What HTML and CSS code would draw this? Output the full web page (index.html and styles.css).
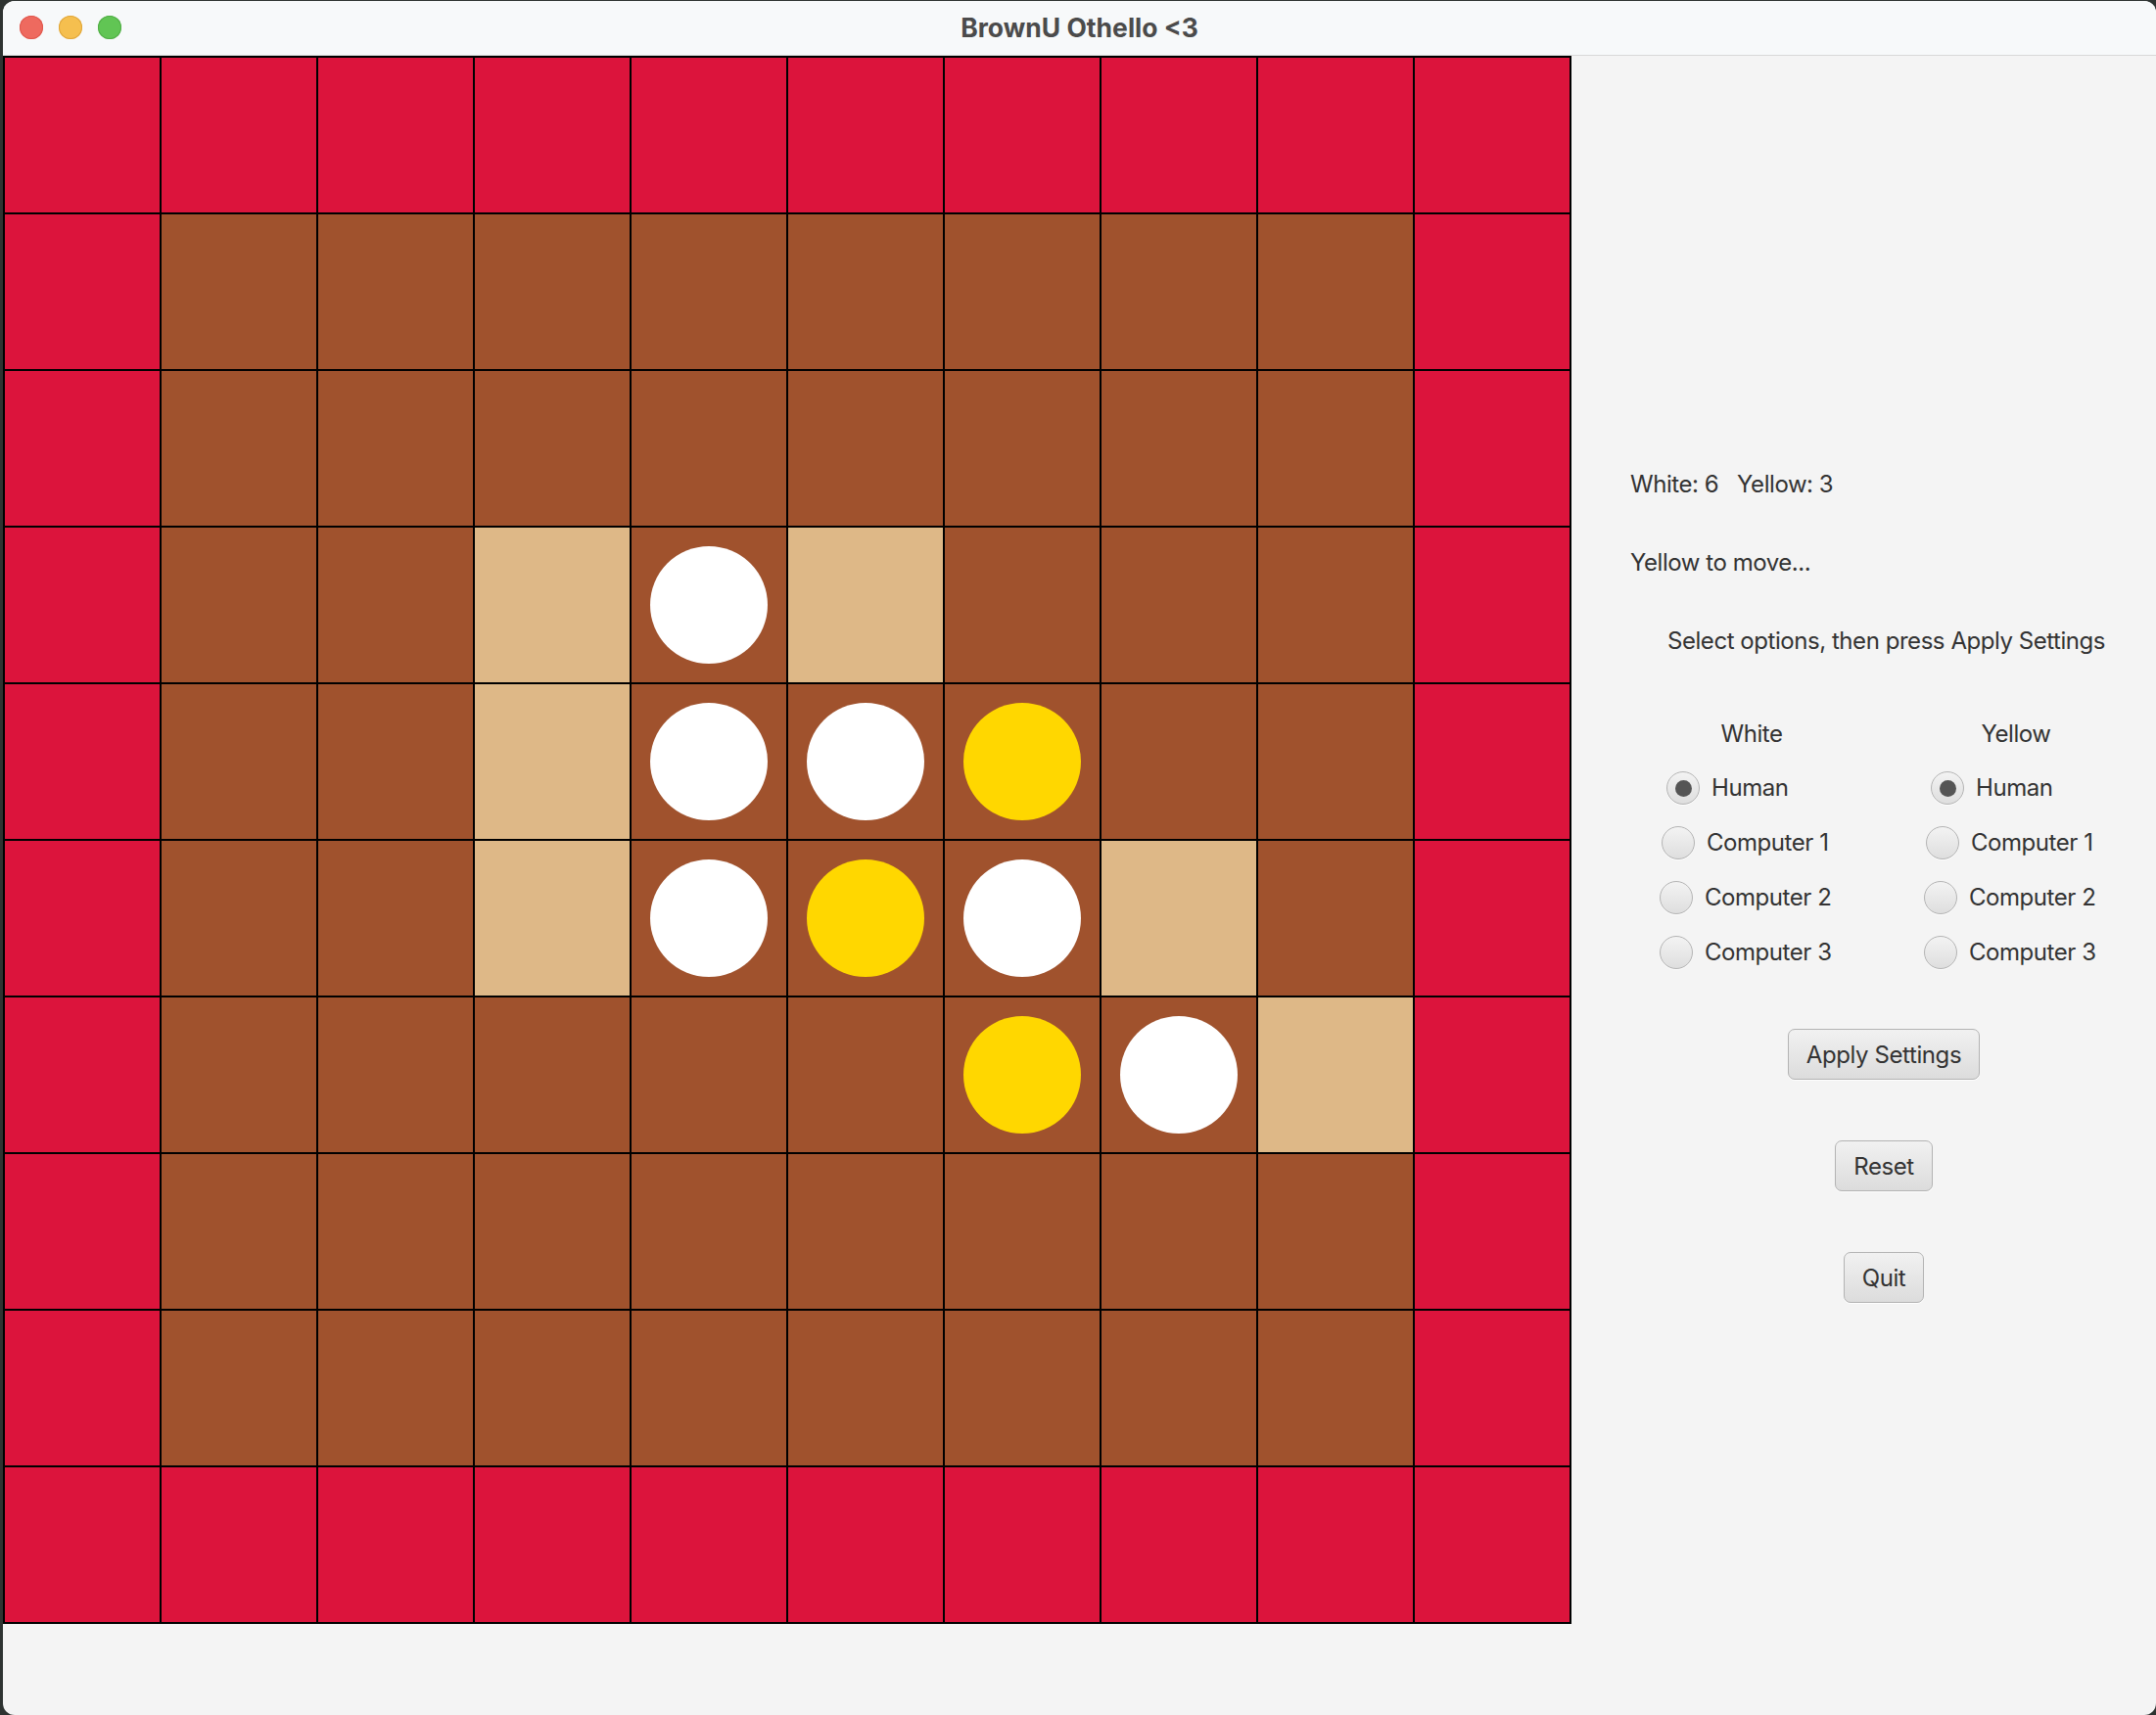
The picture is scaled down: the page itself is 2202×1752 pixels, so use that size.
FILE: index.html
```html
<!DOCTYPE html>
<html lang="en">
<head>
<meta charset="utf-8">
<title>BrownU Othello &lt;3</title>
<link rel="stylesheet" href="styles.css">
</head>
<body>
<div class="window">
  <header class="titlebar">
    <div class="lights">
      <span class="light red"></span>
      <span class="light amber"></span>
      <span class="light green"></span>
    </div>
    <div class="title">BrownU Othello &lt;3</div>
    <div class="spacer"></div>
  </header>
  <div class="content">
    <div class="board-area">
      <div class="board">
        <div class="cell edge"></div><div class="cell edge"></div><div class="cell edge"></div><div class="cell edge"></div><div class="cell edge"></div><div class="cell edge"></div><div class="cell edge"></div><div class="cell edge"></div><div class="cell edge"></div><div class="cell edge"></div>

        <div class="cell edge"></div><div class="cell field"></div><div class="cell field"></div><div class="cell field"></div><div class="cell field"></div><div class="cell field"></div><div class="cell field"></div><div class="cell field"></div><div class="cell field"></div><div class="cell edge"></div>

        <div class="cell edge"></div><div class="cell field"></div><div class="cell field"></div><div class="cell field"></div><div class="cell field"></div><div class="cell field"></div><div class="cell field"></div><div class="cell field"></div><div class="cell field"></div><div class="cell edge"></div>

        <div class="cell edge"></div><div class="cell field"></div><div class="cell field"></div><div class="cell hint"></div><div class="cell field"><span class="disc white"></span></div><div class="cell hint"></div><div class="cell field"></div><div class="cell field"></div><div class="cell field"></div><div class="cell edge"></div>

        <div class="cell edge"></div><div class="cell field"></div><div class="cell field"></div><div class="cell hint"></div><div class="cell field"><span class="disc white"></span></div><div class="cell field"><span class="disc white"></span></div><div class="cell field"><span class="disc yellow"></span></div><div class="cell field"></div><div class="cell field"></div><div class="cell edge"></div>

        <div class="cell edge"></div><div class="cell field"></div><div class="cell field"></div><div class="cell hint"></div><div class="cell field"><span class="disc white"></span></div><div class="cell field"><span class="disc yellow"></span></div><div class="cell field"><span class="disc white"></span></div><div class="cell hint"></div><div class="cell field"></div><div class="cell edge"></div>

        <div class="cell edge"></div><div class="cell field"></div><div class="cell field"></div><div class="cell field"></div><div class="cell field"></div><div class="cell field"></div><div class="cell field"><span class="disc yellow"></span></div><div class="cell field"><span class="disc white"></span></div><div class="cell hint"></div><div class="cell edge"></div>

        <div class="cell edge"></div><div class="cell field"></div><div class="cell field"></div><div class="cell field"></div><div class="cell field"></div><div class="cell field"></div><div class="cell field"></div><div class="cell field"></div><div class="cell field"></div><div class="cell edge"></div>

        <div class="cell edge"></div><div class="cell field"></div><div class="cell field"></div><div class="cell field"></div><div class="cell field"></div><div class="cell field"></div><div class="cell field"></div><div class="cell field"></div><div class="cell field"></div><div class="cell edge"></div>

        <div class="cell edge"></div><div class="cell edge"></div><div class="cell edge"></div><div class="cell edge"></div><div class="cell edge"></div><div class="cell edge"></div><div class="cell edge"></div><div class="cell edge"></div><div class="cell edge"></div><div class="cell edge"></div>
      </div>
    </div>

    <aside class="panel">
      <p class="line score">White: 6   Yellow: 3</p>
      <p class="line turn">Yellow to move...</p>
      <p class="line help">Select options, then press Apply Settings</p>

      <div class="players">
        <div class="player-col">
          <div class="col-head">White</div>
          <div class="radio-list">
            <label class="radio r-human"><span class="dot checked"></span><span class="rlabel">Human</span></label>
            <label class="radio r-c1"><span class="dot"></span><span class="rlabel">Computer 1</span></label>
            <label class="radio r-c2"><span class="dot"></span><span class="rlabel">Computer 2</span></label>
            <label class="radio r-c2"><span class="dot"></span><span class="rlabel">Computer 3</span></label>
          </div>
        </div>
        <div class="player-col">
          <div class="col-head">Yellow</div>
          <div class="radio-list">
            <label class="radio r-human"><span class="dot checked"></span><span class="rlabel">Human</span></label>
            <label class="radio r-c1"><span class="dot"></span><span class="rlabel">Computer 1</span></label>
            <label class="radio r-c2"><span class="dot"></span><span class="rlabel">Computer 2</span></label>
            <label class="radio r-c2"><span class="dot"></span><span class="rlabel">Computer 3</span></label>
          </div>
        </div>
      </div>

      <div class="actions">
        <button class="btn">Apply Settings</button>
        <button class="btn">Reset</button>
        <button class="btn">Quit</button>
      </div>
    </aside>
  </div>
</div>
</body>
</html>
```

FILE: styles.css
```css
* { box-sizing: border-box; }

html, body {
  margin: 0;
  padding: 0;
  background: #2e3331;
  height: 1752px;
  overflow: hidden;
}

body {
  font-family: Inter, "Noto Sans", sans-serif;
  color: #333333;
}

.window {
  margin-left: 3px;
  margin-top: 1px;
  width: 2199px;
  height: 1751px;
  border-radius: 12px;
  overflow: hidden;
  background: #f4f4f4;
  display: flex;
  flex-direction: column;
}

.titlebar {
  height: 56px;
  flex: 0 0 56px;
  background: #f7f9fa;
  border-bottom: 1px solid #d8d8d8;
  display: grid;
  grid-template-columns: 1fr auto 1fr;
  align-items: center;
}

.lights {
  display: flex;
  gap: 16px;
  padding-left: 17px;
  padding-bottom: 1px;
}

.light {
  width: 24px;
  height: 24px;
  border-radius: 50%;
  display: block;
}
.light.red { background: #ee6a5f; box-shadow: inset 0 0 0 1px #e0574c; }
.light.amber { background: #f5bf4f; box-shadow: inset 0 0 0 1px #e0a63a; }
.light.green { background: #61c554; box-shadow: inset 0 0 0 1px #50ad45; }

.title {
  font-weight: 700;
  font-size: 26.5px;
  color: #4b4b4b;
  letter-spacing: 0;
  padding-bottom: 1px;
}

.content {
  flex: 1;
  display: flex;
}

.board-area {
  flex: 0 0 auto;
}

.board {
  display: grid;
  grid-template-columns: repeat(10, 158px);
  grid-auto-rows: 158px;
  gap: 2px;
  border: 2px solid #000;
  background: #000;
  width: 1602px;
}

.cell {
  display: flex;
  align-items: center;
  justify-content: center;
}
.cell.edge { background: #dc143c; }
.cell.field { background: #a0522d; }
.cell.hint { background: #deb887; }

.disc {
  width: 120px;
  height: 120px;
  border-radius: 50%;
  display: block;
}
.disc.white { background: #ffffff; }
.disc.yellow { background: #ffd700; }

.panel {
  flex: 1;
  padding-top: 423px;
  font-size: 24px;
  letter-spacing: -0.45px;
  line-height: 30px;
}

.line {
  margin: 0;
  white-space: pre;
}
.score { margin-left: 60px; }
.turn { margin-left: 60px; margin-top: 50px; }
.help { margin-left: 98px; margin-top: 50px; }

.players {
  display: flex;
  margin-top: 65px;
  margin-left: 49px;
}

.player-col { width: 270px; }

.col-head {
  text-align: center;
  height: 30px;
}

.radio-list {
  margin-top: 12px;
  display: flex;
  flex-direction: column;
}

.radio {
  height: 56px;
  display: flex;
  align-items: center;
  gap: 12px;
}
.r-human { padding-left: 48px; }
.r-c1 { padding-left: 43px; }
.r-c2 { padding-left: 41px; }

.dot {
  width: 34px;
  height: 34px;
  border-radius: 50%;
  border: 1.5px solid #b4b4b4;
  background: linear-gradient(#f3f3f3, #dedede);
  box-shadow: 0 1px 0 rgba(255,255,255,0.8);
  display: flex;
  align-items: center;
  justify-content: center;
}
.dot.checked::after {
  content: "";
  width: 17px;
  height: 17px;
  border-radius: 50%;
  background: #555555;
}

.actions {
  display: flex;
  flex-direction: column;
  align-items: center;
  gap: 62px;
  margin-top: 50px;
  padding-left: 41px;
}

.btn {
  height: 52px;
  padding: 0 18px;
  font-family: inherit;
  font-size: 24px;
  letter-spacing: -0.4px;
  color: #333333;
  border: 1.5px solid #b3b3b3;
  border-radius: 7px;
  background: linear-gradient(#f1f1f1, #dcdcdc);
  box-shadow: 0 1px 0 rgba(255,255,255,0.9);
}
```
